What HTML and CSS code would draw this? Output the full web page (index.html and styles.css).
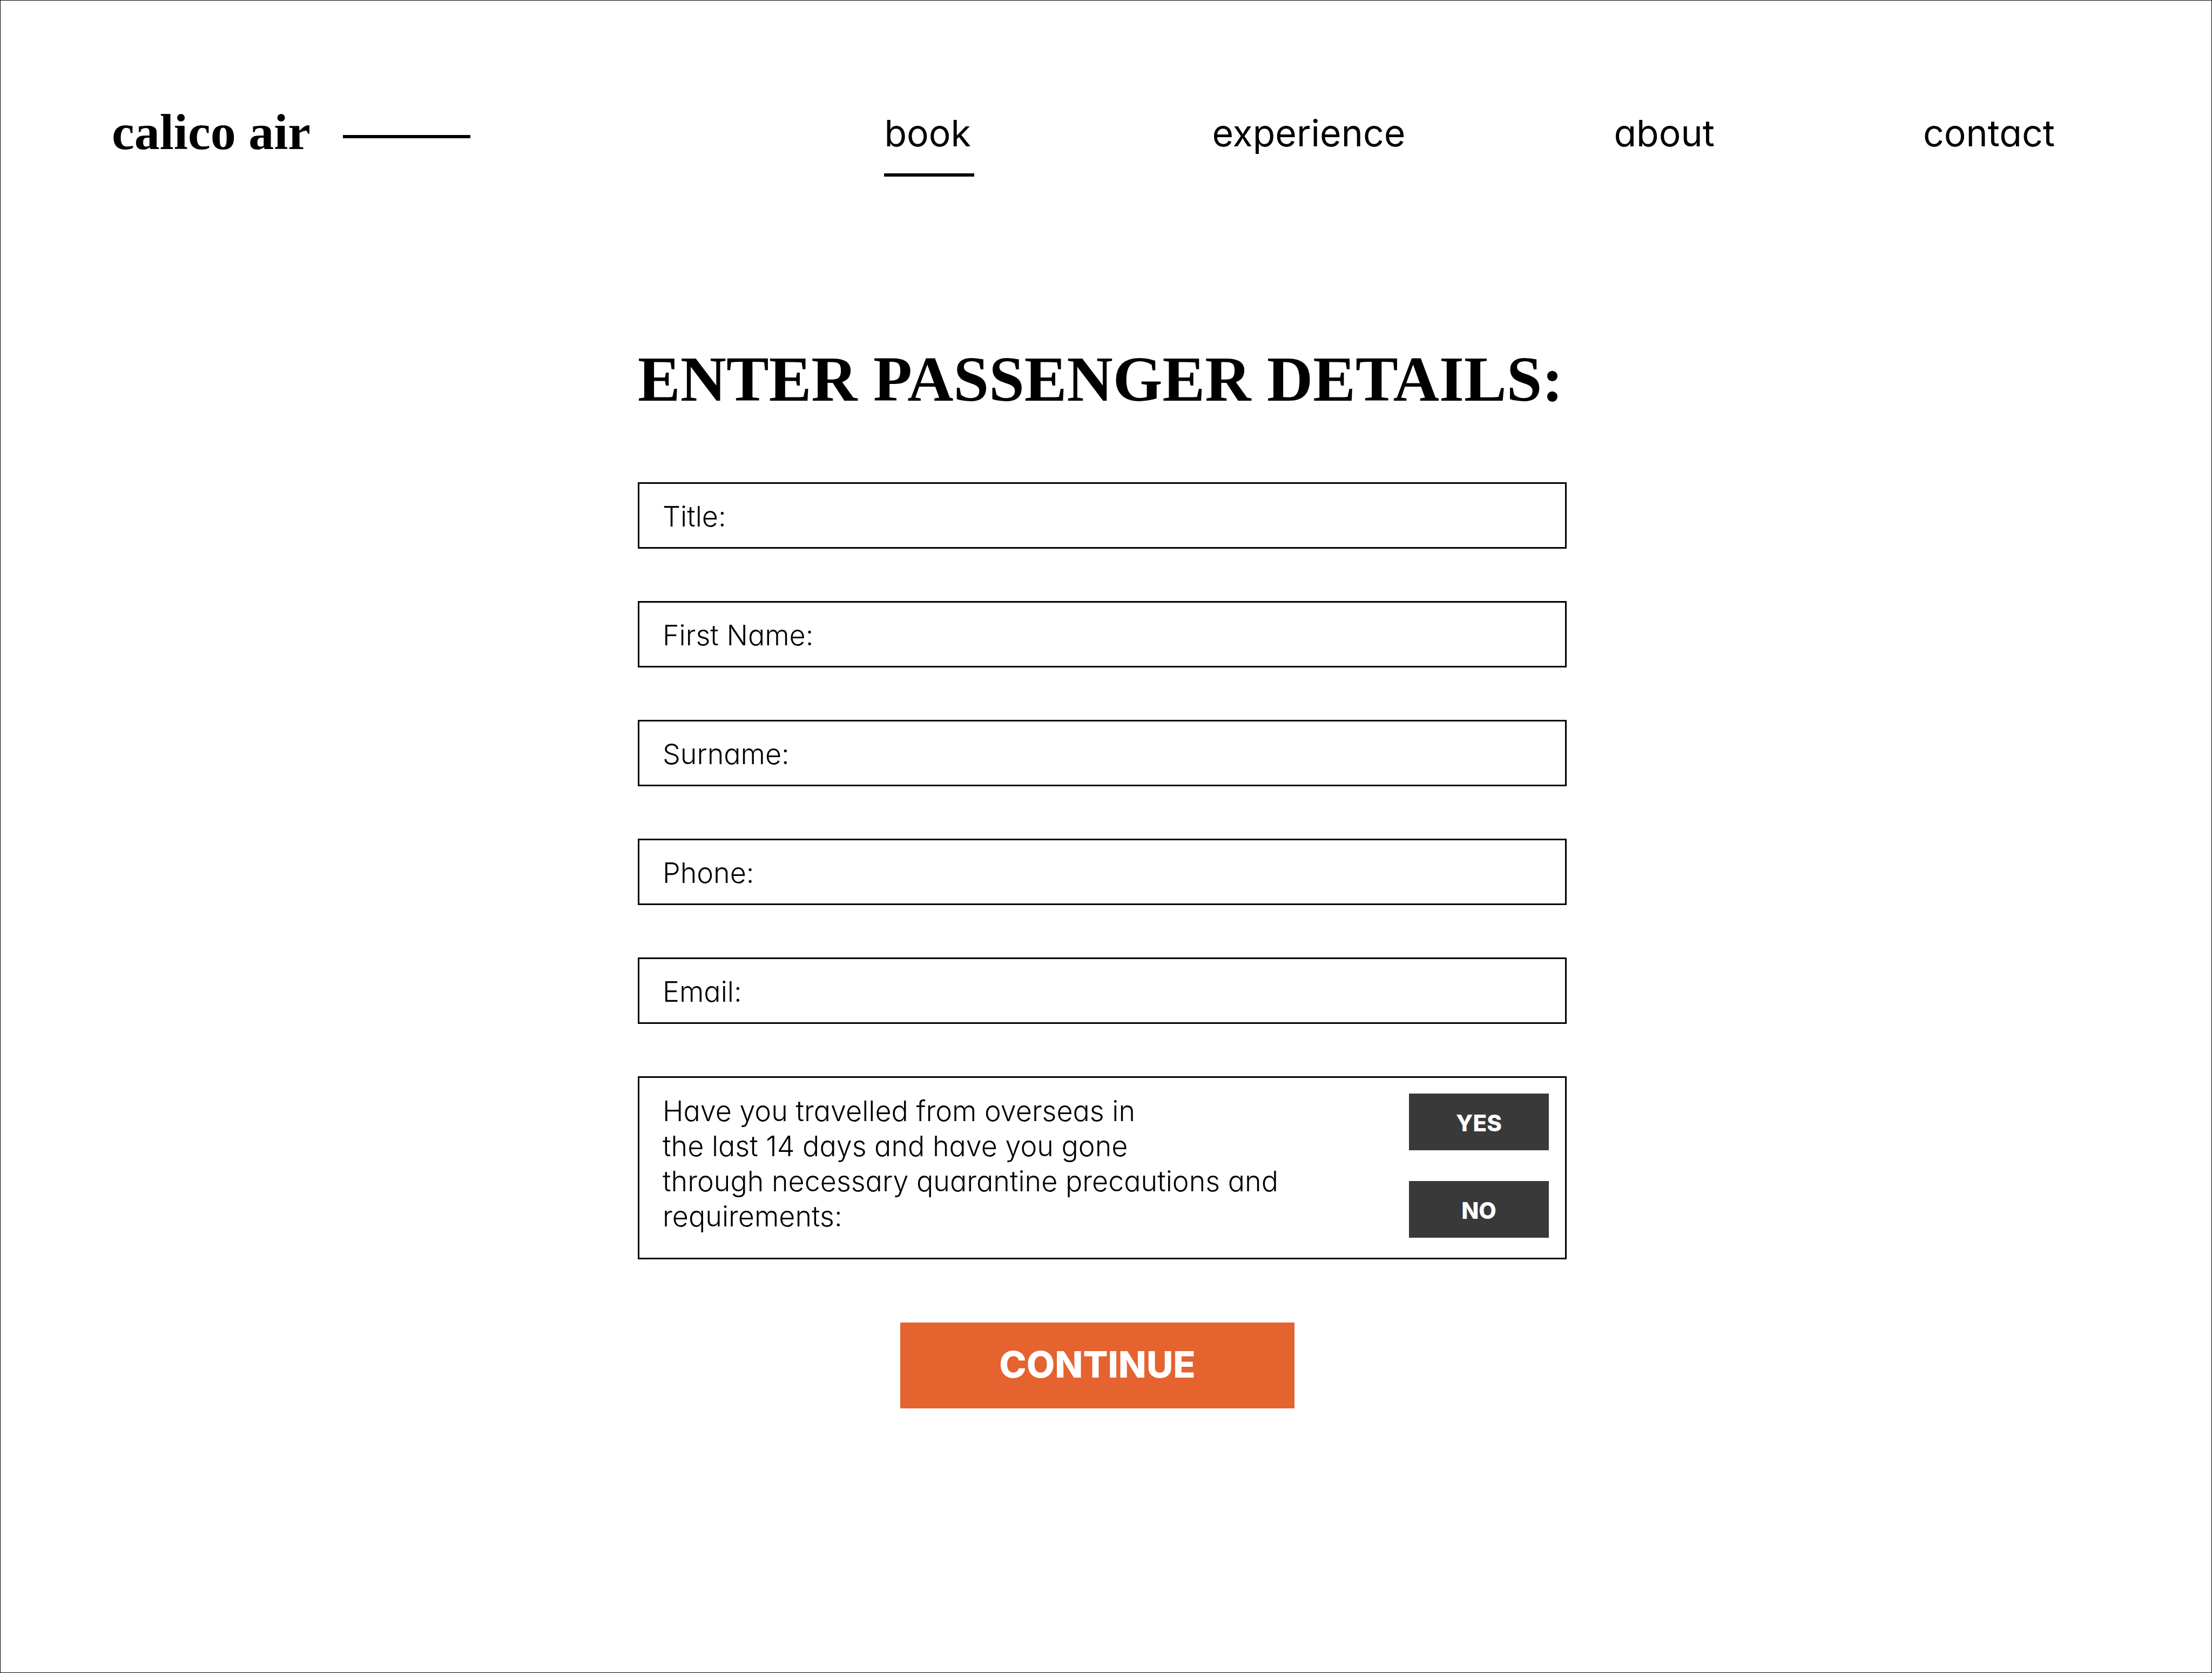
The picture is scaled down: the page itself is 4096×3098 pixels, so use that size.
FILE: index.html
```html
<!DOCTYPE html>
<html lang="en">
<head>
<meta charset="utf-8">
<meta name="viewport" content="width=device-width, initial-scale=1">
<title>calico air – Passenger details</title>
<link rel="stylesheet" href="styles.css">
</head>
<body>
<header class="site-header">
  <a class="logo" href="#">calico air</a>
  <nav class="nav" aria-label="Main">
    <a class="nav-link nav-link-active" href="#book" aria-current="page">book</a>
    <a class="nav-link" href="#experience">experience</a>
    <a class="nav-link" href="#about">about</a>
    <a class="nav-link" href="#contact">contact</a>
  </nav>
</header>
<main class="content">
  <h1 class="title">ENTER PASSENGER DETAILS:</h1>
  <form class="form">
    <div class="field"><label for="title">Title:</label><input id="title" type="text"></div>
    <div class="field"><label for="first-name">First Name:</label><input id="first-name" type="text"></div>
    <div class="field"><label for="surname">Surname:</label><input id="surname" type="text"></div>
    <div class="field"><label for="phone">Phone:</label><input id="phone" type="tel"></div>
    <div class="field"><label for="email">Email:</label><input id="email" type="email"></div>
    <div class="question" role="group" aria-labelledby="travel">
      <p class="question-text" id="travel">Have you travelled from overseas in<br>the last 14 days and have you gone<br>through necessary quarantine precautions and<br>requirements:</p>
      <div class="answers">
        <button class="answer" type="button">YES</button>
        <button class="answer" type="button">NO</button>
      </div>
    </div>
    <button class="continue" type="submit">CONTINUE</button>
  </form>
</main>
</body>
</html>
```
FILE: styles.css
```css
* {
  box-sizing: border-box;
}

body {
  margin: 0;
  min-height: 100vh;
  border: 1px solid #000;
  background: #fff;
  color: #000;
  font-family: Inter, "Liberation Sans", sans-serif;
  font-feature-settings: "cv11";
}

a {
  color: inherit;
  text-decoration: none;
}

/* Header */
.site-header {
  display: flex;
  align-items: flex-start;
  justify-content: space-between;
  padding: 196px 290px 0 206px;
}

.logo {
  display: flex;
  align-items: center;
  gap: 60px;
  font: bold 94px/94px "Liberation Serif", serif;
}

.logo::after {
  content: "";
  width: 236px;
  height: 6px;
  margin-top: 18px;
  background: #000;
}

.nav {
  display: flex;
  gap: 386px;
  padding-top: 9px;
}

.nav-link {
  padding-bottom: 35px;
  border-bottom: 6px solid transparent;
  font-size: 68px;
  line-height: 80px;
}

.nav-link-active {
  min-width: 167px;
  margin-right: 54px;
  border-color: #000;
}

/* Passenger form */
.content {
  max-width: 1734px;
  margin: 0 auto;
  padding: 312px 14px 0 0;
}

.title {
  margin: 0 0 126px;
  font: bold 118px/128px "Liberation Serif", serif;
  white-space: nowrap;
}

.form {
  display: flex;
  flex-direction: column;
  gap: 97px;
}

.field,
.question {
  display: flex;
  border: 3px solid #000;
  font-size: 52px;
  font-weight: 300;
  line-height: 65px;
}

.field {
  align-items: center;
  gap: 24px;
  height: 123px;
  padding: 4px 28px 0 43px;
}

.field input {
  flex: 1;
  min-width: 0;
  padding: 0;
  border: 0;
  outline: 0;
  background: none;
  color: inherit;
  font: inherit;
}

.question {
  justify-content: space-between;
  padding: 29px 30px 37px 43px;
}

.question-text {
  margin: 0;
}

.answers {
  display: flex;
  flex-direction: column;
  gap: 57px;
}

.answer,
.continue {
  border: 0;
  color: #fff;
  font-family: inherit;
  font-weight: 800;
}

.answer {
  width: 259px;
  height: 105px;
  padding: 4px 0 0;
  background: #393939;
  font-size: 42px;
}

.continue {
  align-self: center;
  width: 730px;
  height: 159px;
  margin: 20px 18px 0 0;
  padding: 0 0 6px;
  background: #e5632f;
  font-size: 68px;
}
```
